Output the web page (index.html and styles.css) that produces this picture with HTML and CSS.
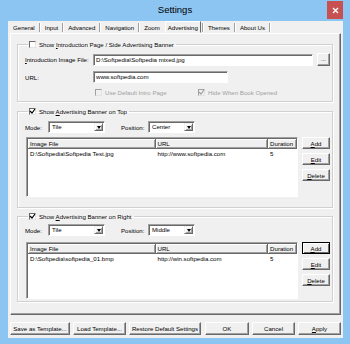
FILE: index.html
```html
<!DOCTYPE html>
<html>
<head>
<meta charset="utf-8">
<title>Settings</title>
<link rel="stylesheet" href="styles.css">
</head>
<body>
<div class="window">
  <div class="titlebar">
    <span></span>
    <span class="title">Settings</span>
    <span class="close"><svg width="7" height="7" viewBox="0 0 7 7"><path d="M1 1L6 6M6 1L1 6" stroke="#fff" stroke-width="1.4"/></svg></span>
  </div>
  <div class="client">
    <div class="tabs">
      <span class="tab">General</span><span class="sep"></span>
      <span class="tab">Input</span><span class="sep"></span>
      <span class="tab">Advanced</span><span class="sep"></span>
      <span class="tab">Navigation</span><span class="sep"></span>
      <span class="tab">Zoom</span>
      <span class="tab active">Advertising</span><span class="sep"></span>
      <span class="tab">Themes</span><span class="sep"></span>
      <span class="tab">About Us</span><span class="sep"></span>
    </div>
    <div class="panel">
      <fieldset class="group g1">
        <legend><span class="cb"></span><span>Show <u>I</u>ntroduction Page / Side Advertising Banner</span></legend>
        <div class="row r1">
          <span class="lbl"><u>I</u>ntroduction Image File:</span>
          <span class="edit grow">D:\Softpedia\Softpedia mixed.jpg</span>
          <span class="btn dots">...</span>
        </div>
        <div class="row r2">
          <span class="lbl">URL:</span>
          <span class="edit url">www.softpedia.com</span>
        </div>
        <div class="row r3">
          <span class="cbitem w1 disabled"><span class="cb dis"></span><span>Use Default Intro Page</span></span>
          <span class="cbitem disabled"><span class="cb dis"><svg width="7" height="7" viewBox="0 0 7 7"><path d="M1 3L3 5L6 1" stroke="#a0a0a0" stroke-width="1.2" fill="none"/></svg></span><span>Hide When Book Opened</span></span>
        </div>
      </fieldset>

      <fieldset class="group g2">
        <legend><span class="cb"><svg width="7" height="7" viewBox="0 0 7 7"><path d="M1 3L3 5L6 1" stroke="#000" stroke-width="1.2" fill="none"/></svg></span><span>Show <u>A</u>dvertising Banner on Top</span></legend>
        <div class="row moderow">
          <span class="mlbl">Mode:</span>
          <span class="combo c1"><span class="ctext">Tile</span><span class="dd"><span class="tri"></span></span></span>
          <span class="plbl">Position:</span>
          <span class="combo c2"><span class="ctext">Center</span><span class="dd"><span class="tri"></span></span></span>
        </div>
        <div class="listrow">
          <div class="list">
            <div class="hdr"><span class="col a">Image File</span><span class="col b">URL</span><span class="col c">Duration</span></div>
            <div class="item"><span class="col a">D:\Softpedia\Softpedia Test.jpg</span><span class="col b">http://www.softpedia.com</span><span class="col c">5</span></div>
          </div>
          <div class="sidebtns">
            <span class="btn sb"><u>A</u>dd</span>
            <span class="btn sb"><u>E</u>dit</span>
            <span class="btn sb"><u>D</u>elete</span>
          </div>
        </div>
      </fieldset>

      <fieldset class="group g3">
        <legend><span class="cb"><svg width="7" height="7" viewBox="0 0 7 7"><path d="M1 3L3 5L6 1" stroke="#000" stroke-width="1.2" fill="none"/></svg></span><span>Show <u>A</u>dvertising Banner on Right</span></legend>
        <div class="row moderow">
          <span class="mlbl">Mode:</span>
          <span class="combo c1"><span class="ctext">Tile</span><span class="dd"><span class="tri"></span></span></span>
          <span class="plbl">Position:</span>
          <span class="combo c2"><span class="ctext">Middle</span><span class="dd"><span class="tri"></span></span></span>
        </div>
        <div class="listrow">
          <div class="list l3">
            <div class="hdr"><span class="col a">Image File</span><span class="col b">URL</span><span class="col c">Duration</span></div>
            <div class="item"><span class="col a">D:\Softpedia\softpedia_01.bmp</span><span class="col b">http://win.softpedia.com</span><span class="col c">5</span></div>
          </div>
          <div class="sidebtns">
            <span class="btn sb focus"><u>A</u>dd</span>
            <span class="btn sb"><u>E</u>dit</span>
            <span class="btn sb"><u>D</u>elete</span>
          </div>
        </div>
      </fieldset>
    </div>
    <div class="footer">
      <span class="btn fb save">Save as Template...</span>
      <span class="btn fb load">Load Template...</span>
      <span class="btn fb restore">Restore Default Settings</span>
      <span class="btn fb ok">OK</span>
      <span class="btn fb cancel">Cancel</span>
      <span class="btn fb apply"><u>A</u>pply</span>
    </div>
  </div>
</div>
</body>
</html>
```
FILE: styles.css
```css
* { box-sizing: border-box; }
body {
  margin: 0;
  background: #8cc4f2;
  font-family: "Liberation Sans", Arial, sans-serif;
  font-size: 6.1px;
  color: #000;
}
u { text-decoration: underline; text-underline-offset: 1px; text-decoration-thickness: 0.5px; }

.window { width: 350px; height: 344px; display: flex; flex-direction: column; }

.titlebar {
  height: 21px;
  display: grid;
  grid-template-columns: 1fr auto 1fr;
  align-items: start;
}
.title { font-size: 9.5px; line-height: 19px; color: #000; }
.close {
  justify-self: end;
  margin: 1px 7px 0 0;
  width: 16px;
  height: 18px;
  background: #c75050;
  display: flex;
  align-items: center;
  justify-content: center;
}
.close svg { display: block; }

.client {
  flex: 1;
  margin: 0 7px 6px 8px;
  background: #f0f0f0;
  display: flex;
  flex-direction: column;
}

.tabs {
  height: 12px;
  display: flex;
  align-items: stretch;
  padding-left: 2px;
}
.tab {
  display: flex;
  align-items: center;
  padding: 1px 3px 0 3px;
  white-space: nowrap;
}
.tab.active {
  margin-left: 2px;
  border: 1px solid;
  border-color: #fff #696969 transparent #fff;
  padding: 0 2px;
}
.sep {
  width: 2px;
  margin: 2px 1px 1px 1px;
  border-left: 1px solid #a0a0a0;
  border-right: 1px solid #fff;
}

.panel {
  height: 282px;
  margin: 0 2px;
  border: 1px solid;
  border-color: #fff #696969 #696969 #fff;
  box-shadow: inset -1px -1px 0 #a0a0a0;
  padding: 0 7px 0 6px;
  display: flex;
  flex-direction: column;
}

.group {
  margin: 0;
  min-width: 0;
  border: 1px solid #d0d0d0;
  box-shadow: inset 1px 1px 0 #fff, 1px 1px 0 #fff;
  padding: 0 2px 0 7px;
}
.group legend {
  display: flex;
  align-items: center;
  line-height: 9px;
  height: 9px;
  margin-left: 3px;
  padding: 0 2px 0 1px;
  gap: 3px;
  white-space: nowrap;
}
.g1 { margin-top: 6px; padding-top: 4px; padding-bottom: 5px; }
.g2 { margin-top: 5px; padding-top: 5px; padding-bottom: 10px; }
.g3 { margin-top: 4px; padding-top: 3px; padding-bottom: 2px; }

.cb {
  width: 7px;
  height: 7px;
  flex: none;
  background: #fff;
  border: 1px solid;
  border-color: #696969 #e3e3e3 #e3e3e3 #696969;
  display: flex;
  align-items: center;
  justify-content: center;
}
.cb svg { display: block; margin: -1px; }
.cb.dis { background: #f0f0f0; border-color: #a0a0a0 #e3e3e3 #e3e3e3 #a0a0a0; }

.row { display: flex; align-items: center; }
.r1 { height: 13px; }
.r2 { height: 12px; margin-top: 5px; }
.r3 { height: 8px; margin-top: 5px; padding-left: 70px; }
.lbl { width: 68px; flex: none; white-space: nowrap; }

.edit {
  height: 12px;
  background: #fff;
  border: 1px solid;
  border-color: #a0a0a0 #fff #fff #a0a0a0;
  box-shadow: inset 1px 1px 0 #696969;
  padding-left: 2px;
  line-height: 10px;
  white-space: nowrap;
  overflow: hidden;
}
.grow { flex: 1; margin-right: 4px; }
.url { width: 135px; }

.btn {
  display: flex;
  align-items: center;
  justify-content: center;
  background: #f0f0f0;
  border: 1px solid;
  border-color: #fff #696969 #696969 #fff;
  box-shadow: inset -1px -1px 0 #a0a0a0;
  white-space: nowrap;
}
.dots { width: 13px; height: 13px; padding-bottom: 2px; }

.cbitem { display: flex; align-items: center; gap: 3px; white-space: nowrap; }
.w1 { width: 103px; }
.disabled { color: #a0a0a0; }

.moderow { height: 12px; }
.mlbl { width: 23px; flex: none; }
.plbl { width: 27px; flex: none; margin-left: 16px; }
.combo {
  height: 12px;
  display: flex;
  background: #fff;
  border: 1px solid;
  border-color: #a0a0a0 #fff #fff #a0a0a0;
  box-shadow: inset 1px 1px 0 #696969;
  padding: 1px 1px 1px 1px;
}
.c1 { width: 57px; }
.c2 { width: 47px; }
.ctext { flex: 1; padding-left: 2px; line-height: 8px; }
.dd {
  width: 9px;
  background: #f0f0f0;
  border: 1px solid;
  border-color: #f0f0f0 #696969 #696969 #f0f0f0;
  box-shadow: inset 1px 1px 0 #fff, inset -1px -1px 0 #a0a0a0;
  display: flex;
  align-items: center;
  justify-content: center;
}
.tri {
  width: 0;
  height: 0;
  border-left: 2.5px solid transparent;
  border-right: 2.5px solid transparent;
  border-top: 3px solid #000;
}

.listrow { display: flex; align-items: flex-start; margin-top: 4px; }
.g3 .listrow { margin-top: 6px; }
.list {
  width: 272px;
  height: 60px;
  margin-left: 1px;
  background: #fff;
  border: 1px solid;
  border-color: #a0a0a0 #fff #fff #a0a0a0;
  box-shadow: inset 1px 1px 0 #696969;
  display: flex;
  flex-direction: column;
}
.list.l3 { height: 57px; }
.hdr { display: flex; height: 10px; margin: 1px 0 0 1px; }
.hdr .col {
  background: #f0f0f0;
  border-right: 1px solid #696969;
  border-bottom: 1px solid #696969;
  box-shadow: inset 1px 1px 0 #fff, inset -1px -1px 0 #a0a0a0;
  line-height: 9px;
}
.col { padding-left: 2px; white-space: nowrap; overflow: hidden; }
.col.a { width: 128px; }
.col.b { width: 113px; }
.col.c { width: 29px; }
.item { display: flex; height: 10px; line-height: 10px; margin-left: 1px; }

.sidebtns {
  width: 28px;
  margin-left: 4px;
  display: flex;
  flex-direction: column;
  gap: 4px;
}
.sb { height: 12px; }
.sb.focus {
  border-color: #000;
  box-shadow: inset 1px 1px 0 #fff, inset -1px -1px 0 #696969;
}

.footer {
  display: flex;
  margin-top: 7px;
  padding-left: 2px;
  gap: 3px;
}
.fb { height: 13px; }
.save { width: 60px; }
.load { width: 53px; }
.restore { width: 72px; }
.ok { width: 44px; margin-left: 1px; }
.cancel { width: 43px; }
.apply { width: 43px; }
```
